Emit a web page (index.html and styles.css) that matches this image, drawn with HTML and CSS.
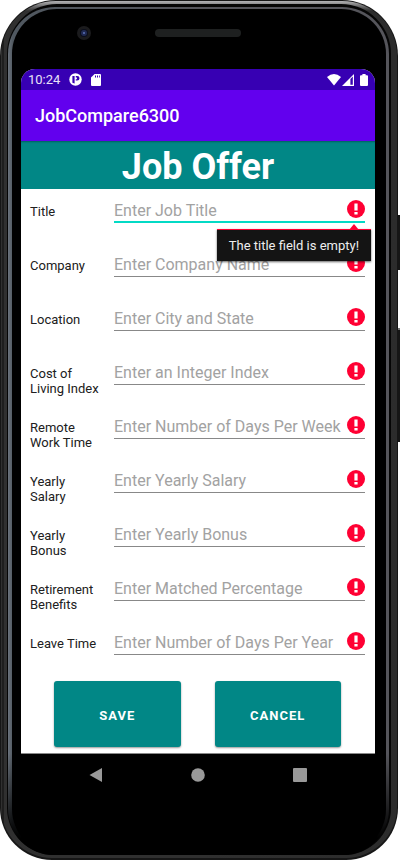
FILE: index.html
```html
<!DOCTYPE html>
<html lang="en">
<head>
<meta charset="utf-8">
<meta name="viewport" content="width=device-width, initial-scale=1">
<title>JobCompare6300</title>
<link rel="stylesheet" href="styles.css">
</head>
<body>
<svg class="defs" aria-hidden="true">
  <symbol id="error" viewBox="0 0 18 18">
    <circle cx="9" cy="9" r="9" fill="#ff0033"/>
    <path d="M7.4 3.6h3.2v6.8H7.4zM7.4 12h3.2v2.6H7.4z" fill="#fff"/>
  </symbol>
</svg>
<div class="phone">
  <span class="side-key power"></span>
  <span class="side-key volume"></span>
  <div class="rim"><div class="groove"><div class="bevel"><div class="glass">
    <div class="earpiece">
      <svg class="camera" viewBox="0 0 14 14" aria-hidden="true">
        <circle cx="7" cy="7" r="7" fill="#1b1b1d"/><circle cx="7" cy="7" r="4" fill="#0b0e1c"/>
        <circle cx="7" cy="7" r="3" fill="#202a52"/><circle cx="7" cy="7" r="1" fill="#5a70b8"/>
      </svg>
      <span class="speaker"></span>
    </div>
    <div class="screen">
      <div class="status">
        <span class="clock">10:24</span>
        <svg class="notice" viewBox="0 0 13 13" aria-hidden="true">
          <circle cx="6.5" cy="6.5" r="6.2" fill="#fff"/>
          <path d="M3.4 3h2.2v7.6l-2.2-.8zM6.8 3h1.4a2.2 2.2 0 0 1 0 4.6H6.8V6.2h1.1V4.6H6.8z" fill="#3700b3"/>
        </svg>
        <svg class="card" viewBox="0 0 10 12" aria-hidden="true">
          <path d="M3.6 0H9q1 0 1 1v10q0 1-1 1H1q-1 0-1-1V3.6z" fill="#fff"/>
          <path d="M4 1.6h1v2H4zM6 1.6h1v2H6zM8 1.6h.8v2H8z" fill="#3700b3"/>
        </svg>
        <span class="spacer"></span>
        <svg class="wifi" viewBox="0 0 14 12" aria-hidden="true"><path d="M0 3Q7-3 14 3L7 11.5z" fill="#fff"/></svg>
        <svg class="signal" viewBox="0 0 12 12" aria-hidden="true">
          <path d="M0 12L12 0v12z" fill="#fff"/><path d="M8.4 5l2.4-2.4v8.2H8.4z" fill="#3700b3"/>
        </svg>
        <svg class="battery" viewBox="0 0 8 12" aria-hidden="true"><path d="M2.4 0h3.2v1.2H7q1 0 1 1V11q0 1-1 1H1q-1 0-1-1V2.2q0-1 1-1h1.4z" fill="#fff"/></svg>
      </div>
      <header class="appbar">JobCompare6300</header>
      <h1 class="heading">Job Offer</h1>
      <form class="form">
        <div class="row">
          <label for="title">Title</label>
          <div class="field active">
            <input id="title" type="text" placeholder="Enter Job Title">
            <svg class="error"><use href="#error"/></svg>
            <div class="tip" role="alert">The title field is empty!</div>
          </div>
        </div>
        <div class="row">
          <label for="company">Company</label>
          <div class="field"><input id="company" type="text" placeholder="Enter Company Name"><svg class="error"><use href="#error"/></svg></div>
        </div>
        <div class="row">
          <label for="location">Location</label>
          <div class="field"><input id="location" type="text" placeholder="Enter City and State"><svg class="error"><use href="#error"/></svg></div>
        </div>
        <div class="row">
          <label for="cost">Cost of<br>Living Index</label>
          <div class="field"><input id="cost" type="text" placeholder="Enter an Integer Index"><svg class="error"><use href="#error"/></svg></div>
        </div>
        <div class="row">
          <label for="remote">Remote<br>Work Time</label>
          <div class="field"><input id="remote" type="text" placeholder="Enter Number of Days Per Week"><svg class="error"><use href="#error"/></svg></div>
        </div>
        <div class="row">
          <label for="salary">Yearly<br>Salary</label>
          <div class="field"><input id="salary" type="text" placeholder="Enter Yearly Salary"><svg class="error"><use href="#error"/></svg></div>
        </div>
        <div class="row">
          <label for="bonus">Yearly<br>Bonus</label>
          <div class="field"><input id="bonus" type="text" placeholder="Enter Yearly Bonus"><svg class="error"><use href="#error"/></svg></div>
        </div>
        <div class="row">
          <label for="retirement">Retirement<br>Benefits</label>
          <div class="field"><input id="retirement" type="text" placeholder="Enter Matched Percentage"><svg class="error"><use href="#error"/></svg></div>
        </div>
        <div class="row">
          <label for="leave">Leave Time</label>
          <div class="field"><input id="leave" type="text" placeholder="Enter Number of Days Per Year"><svg class="error"><use href="#error"/></svg></div>
        </div>
        <div class="actions">
          <button type="button">SAVE</button>
          <button type="button">CANCEL</button>
        </div>
      </form>
    </div>
    <nav class="navbar">
      <button type="button" aria-label="Back"><svg viewBox="0 0 14 14"><path d="M.5 7L13 0v14z"/></svg></button>
      <button type="button" aria-label="Home"><svg viewBox="0 0 14 14"><circle cx="7" cy="7" r="6.8"/></svg></button>
      <button type="button" aria-label="Overview"><svg viewBox="0 0 14 14"><rect width="14" height="14" rx="1"/></svg></button>
    </nav>
  </div></div></div></div>
</div>
</body>
</html>
```
FILE: styles.css
```css
* { box-sizing: border-box; }
body {
  margin: 0;
  background: #fff;
  font-family: Roboto, "Liberation Sans", sans-serif;
}
.defs { position: absolute; width: 0; height: 0; }

/* Phone body */
.phone {
  position: relative;
  margin-right: 2px;
  padding: 1px 1px 2px;
  border-radius: 56px 56px 52px 52px;
  background: #161616;
}
.side-key { position: absolute; left: 100%; width: 2px; background: #161616; }
.power { top: 215px; height: 55px; }
.volume { top: 328px; height: 114px; border-top: 2px solid #777; }
.rim {
  padding: 3px 6px 3px;
  border-radius: 55px 55px 51px 51px;
  background:
    linear-gradient(#b4b4b6, rgba(120, 120, 122, 0) 10px),
    linear-gradient(90deg, #303030 1px, #0c0c0c 2px, #303030 3px, #303030 50%, #2c2c2c);
}
.groove {
  padding: 3px 2px 0 1px;
  border-radius: 50px 50px 47px 47px;
  background: #050505;
}
.bevel {
  padding: 2px 3px 0 4px;
  border-radius: 47px 47px 46px 46px;
  background:
    linear-gradient(transparent 88%, #000 98%),
    linear-gradient(90deg, #6a727c, #505860 5px, #55555b 50%, #55555b);
}
.glass {
  padding: 0 11px 73px 9px;
  border-radius: 45px 45px 46px 46px;
  background: #000;
}
.earpiece { position: relative; display: flex; justify-content: center; height: 60px; }
.camera { position: absolute; left: 56px; top: 17px; width: 14px; height: 14px; }
.speaker { width: 86px; height: 8px; margin-top: 20px; border-radius: 4px; background: #1e2020; }

/* Screen */
.screen { background: #fff; border-radius: 14px 14px 0 0; border-bottom: 1px solid #888; }
.status {
  display: flex;
  align-items: center;
  height: 21px;
  padding: 0 7px;
  border-radius: 14px 14px 0 0;
  background: #3700b3;
  color: #e9e2f8;
  font-size: 13px;
}
.notice { width: 13px; height: 13px; margin-left: 9px; }
.card { width: 10px; height: 12px; margin-left: 9px; }
.spacer { flex: 1; }
.wifi { width: 14px; height: 12px; }
.signal { width: 12px; height: 12px; margin: 0 6px 0 1px; }
.battery { width: 8px; height: 12px; }
.appbar {
  padding: 1px 14px 0;
  background: #6200ee;
  color: #fff;
  font-size: 18px;
  font-weight: 500;
  line-height: 50px;
}
.heading {
  margin: 0;
  background: #018786;
  box-shadow: inset 0 2px 2px -1px #00605f;
  color: #fff;
  font-size: 36px;
  font-weight: 700;
  line-height: 44px;
  padding-top: 4px;
  text-align: center;
}
.form { padding: 6px 10px 6px 9px; }
.row {
  display: grid;
  grid-template-columns: 84px 1fr;
  align-items: start;
  height: 54px;
}
.row label { padding-top: 9px; color: #202020; font-size: 13px; line-height: 15px; }
.field { position: relative; height: 28px; border-bottom: 1px solid #888; }
.field.active { border-bottom: 2px solid #03dac5; }
.field input {
  display: block;
  width: 100%;
  height: 26px;
  padding: 4px 0 0;
  border: 0;
  outline: 0;
  background: none;
  color: #202020;
  font: 16px Roboto, "Liberation Sans", sans-serif;
}
.field input::placeholder { color: #a2a2a2; opacity: 1; }
.error { position: absolute; right: 0; top: 5px; width: 18px; height: 18px; }
.tip {
  position: absolute;
  z-index: 1;
  top: 34px;
  right: -6px;
  padding: 1px 12px 0;
  border-top: 1px solid #ff0033;
  background: #141414;
  box-shadow: 0 1px 2px rgba(0, 0, 0, .6);
  color: #eee;
  font-size: 13px;
  line-height: 30px;
  white-space: nowrap;
}
.tip::before {
  content: "";
  position: absolute;
  right: 12px;
  bottom: 100%;
  border: 5px solid transparent;
  border-top: 0;
  border-bottom: 6px solid #ff0033;
}
.actions {
  display: grid;
  grid-template-columns: 1fr 1fr;
  gap: 34px;
  padding: 0 24px;
}
.actions button {
  height: 66px;
  padding-top: 3px;
  border: 0;
  border-radius: 3px;
  background: #018786;
  box-shadow: 0 1px 2px rgba(0, 0, 0, .4);
  color: #fff;
  font: 700 13px Roboto, "Liberation Sans", sans-serif;
  letter-spacing: 1px;
}

/* System navigation */
.navbar { display: flex; justify-content: center; gap: 88px; padding-top: 14px; }
.navbar button { width: 14px; height: 14px; padding: 0; border: 0; background: none; }
.navbar svg { display: block; width: 14px; height: 14px; fill: #999; }
```
